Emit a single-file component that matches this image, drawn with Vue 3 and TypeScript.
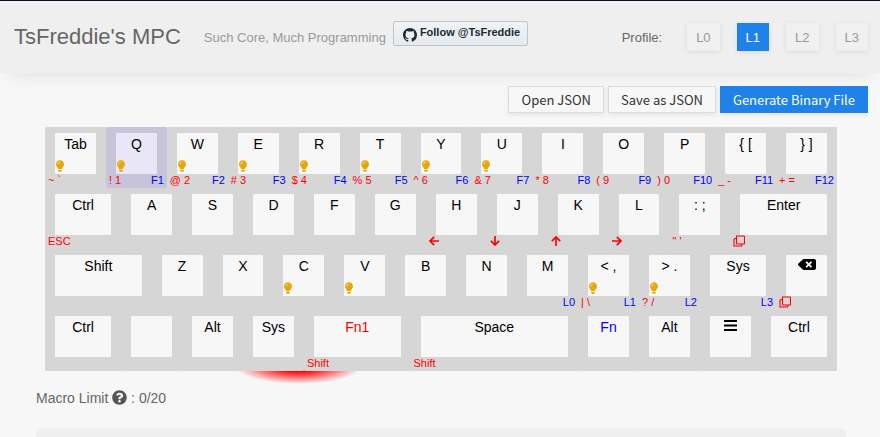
<script setup lang="ts">
import { ref } from 'vue'

type Icon = 'left' | 'down' | 'up' | 'right' | 'copy'

interface Key {
  label: string
  span?: number
  red?: string
  redIcon?: Icon
  blue?: string
  light?: boolean
  tone?: 'red' | 'blue'
  glyph?: 'backspace' | 'menu'
}

// Key widths are counted in quarter units: 4 is a regular key, 52 a full row.
const keys: Key[] = [
  { label: 'Tab', red: '~ `', light: true },
  { label: 'Q', red: '! 1', blue: 'F1', light: true },
  { label: 'W', red: '@ 2', blue: 'F2', light: true },
  { label: 'E', red: '# 3', blue: 'F3', light: true },
  { label: 'R', red: '$ 4', blue: 'F4', light: true },
  { label: 'T', red: '% 5', blue: 'F5', light: true },
  { label: 'Y', red: '^ 6', blue: 'F6', light: true },
  { label: 'U', red: '& 7', blue: 'F7', light: true },
  { label: 'I', red: '* 8', blue: 'F8' },
  { label: 'O', red: '( 9', blue: 'F9' },
  { label: 'P', red: ') 0', blue: 'F10' },
  { label: '{ [', red: '_ -', blue: 'F11' },
  { label: '} ]', red: '+ =', blue: 'F12' },

  { label: 'Ctrl', span: 5, red: 'ESC' },
  { label: 'A' },
  { label: 'S' },
  { label: 'D' },
  { label: 'F' },
  { label: 'G' },
  { label: 'H', redIcon: 'left' },
  { label: 'J', redIcon: 'down' },
  { label: 'K', redIcon: 'up' },
  { label: 'L', redIcon: 'right' },
  { label: ': ;', red: '" \'' },
  { label: 'Enter', span: 7, redIcon: 'copy' },

  { label: 'Shift', span: 7 },
  { label: 'Z' },
  { label: 'X' },
  { label: 'C', light: true },
  { label: 'V', light: true },
  { label: 'B' },
  { label: 'N' },
  { label: 'M', blue: 'L0' },
  { label: '< ,', red: '| \\', blue: 'L1', light: true },
  { label: '> .', red: '? /', blue: 'L2', light: true },
  { label: 'Sys', span: 5, blue: 'L3' },
  { label: '', glyph: 'backspace', redIcon: 'copy' },

  { label: 'Ctrl', span: 5 },
  { label: '' },
  { label: 'Alt' },
  { label: 'Sys' },
  { label: 'Fn1', span: 7, red: 'Shift', tone: 'red' },
  { label: 'Space', span: 11, red: 'Shift' },
  { label: 'Fn', tone: 'blue' },
  { label: 'Alt' },
  { label: '', glyph: 'menu' },
  { label: 'Ctrl', span: 5 },
]

const arrowTurn: Record<string, string> = { left: 'turn-0', up: 'turn-1', right: 'turn-2', down: 'turn-3' }

const profiles = ['L0', 'L1', 'L2', 'L3']
const profile = ref('L1')
const selected = ref(1)
const macros = ref(0)
</script>

<template>
  <header class="top">
    <h1>TsFreddie's MPC</h1>
    <span class="tagline">Such Core, Much Programming</span>
    <a class="follow" href="#">
      <svg viewBox="0 0 16 16" width="14" height="14" aria-hidden="true">
        <path d="M8 0C3.58 0 0 3.58 0 8c0 3.54 2.29 6.53 5.47 7.59.4.07.55-.17.55-.38 0-.19-.01-.82-.01-1.49-2.01.37-2.53-.49-2.69-.94-.09-.23-.48-.94-.82-1.13-.28-.15-.68-.52-.01-.53.63-.01 1.08.58 1.23.82.72 1.21 1.87.87 2.33.66.07-.52.28-.87.51-1.07-1.78-.2-3.64-.89-3.64-3.95 0-.87.31-1.59.82-2.15-.08-.2-.36-1.02.08-2.12 0 0 .67-.21 2.2.82.64-.18 1.32-.27 2-.27s1.36.09 2 .27c1.53-1.04 2.2-.82 2.2-.82.44 1.1.16 1.92.08 2.12.51.56.82 1.27.82 2.15 0 3.07-1.87 3.75-3.65 3.95.29.25.54.73.54 1.48 0 1.07-.01 1.93-.01 2.2 0 .21.15.46.55.38A8.01 8.01 0 0 0 16 8c0-4.42-3.58-8-8-8z" />
      </svg>
      <span>Follow @TsFreddie</span>
    </a>
    <nav class="profiles">
      <span class="caption">Profile:</span>
      <button
        v-for="p in profiles"
        :key="p"
        type="button"
        :class="{ active: p === profile }"
        @click="profile = p"
      >{{ p }}</button>
    </nav>
  </header>

  <main>
    <div class="actions">
      <button type="button">Open JSON</button>
      <button type="button">Save as JSON</button>
      <button type="button" class="primary">Generate Binary File</button>
    </div>

    <section class="board">
      <div class="glow"></div>
      <button
        v-for="(k, i) in keys"
        :key="i"
        type="button"
        class="key"
        :class="['w' + (k.span ?? 4), { selected: i === selected }]"
        @click="selected = i"
      >
        <span class="cap" :class="k.tone">
          <svg v-if="k.glyph === 'backspace'" class="glyph" viewBox="0 0 640 512" width="18" height="15">
            <path d="M576 64H205.3A64 64 0 0 0 160 82.700L9.400 233.400c-12.500 12.500-12.500 32.800 0 45.300L160 429.300A64 64 0 0 0 205.300 448H576c35.300 0 64-28.700 64-64V128c0-35.300-28.700-64-64-64zm-84.700 254.100c6.200 6.200 6.200 16.400 0 22.600l-22.600 22.600c-6.200 6.200-16.400 6.200-22.600 0L384 301.300l-62.100 62.100c-6.200 6.200-16.400 6.200-22.600 0l-22.600-22.600c-6.200-6.200-6.200-16.400 0-22.600L338.700 256l-62.100-62.100c-6.200-6.200-6.200-16.400 0-22.600l22.600-22.600c6.200-6.200 16.400-6.200 22.600 0l62.100 62.100 62.100-62.100c6.200-6.200 16.400-6.200 22.600 0l22.600 22.600c6.200 6.200 6.200 16.400 0 22.600L429.300 256z" />
          </svg>
          <svg v-else-if="k.glyph === 'menu'" class="glyph" viewBox="0 0 13 15" width="13" height="15">
            <path d="M0 2h13v2H0zM0 6.500h13v2H0zM0 11h13v2H0z" />
          </svg>
          <template v-else>{{ k.label }}</template>
          <svg v-if="k.light" class="bulb" viewBox="0 0 352 512" width="8" height="12">
            <path d="M96.100 454.400c0 6.300 1.900 12.500 5.400 17.700l17.100 25.700a32 32 0 0 0 26.600 14.300h61.700a32 32 0 0 0 26.600-14.300l17.100-25.700a32 32 0 0 0 5.400-17.700V416H96zM0 176c0 44.400 16.500 84.900 43.600 115.800 16.500 18.900 42.400 58.200 52.200 91.500V384h160.300v-.8c9.900-33.200 35.700-72.600 52.200-91.500C335.600 260.900 352 220.400 352 176 352 78.600 272.900-.3 175.500 0 73.400.3 0 83 0 176zm176-80c-44.100 0-80 35.900-80 80 0 8.800-7.200 16-16 16s-16-7.200-16-16c0-61.800 50.200-112 112-112 8.800 0 16 7.200 16 16s-7.200 16-16 16z" />
          </svg>
        </span>
        <span class="legend">
          <span class="red">
            <svg v-if="k.redIcon === 'copy'" viewBox="0 0 12 12" width="12" height="12">
              <path d="M3.500 1h7.200q.8 0 .8.800v6.400q0 .8-.8.800H4.300q-.8 0-.8-.8zM3 3.500H2l-1 .800V11h7.500l.8-1.500" fill="none" stroke="currentColor" stroke-width="1.100" />
            </svg>
            <svg v-else-if="k.redIcon" :class="arrowTurn[k.redIcon]" class="arrow" viewBox="0 0 10 10" width="10" height="10">
              <path d="M5.200 .8L1 5l4.200 4.200M1.200 5H10" fill="none" stroke="currentColor" stroke-width="1.700" />
            </svg>
            <template v-else>{{ k.red }}</template>
          </span>
          <span class="blue">{{ k.blue }}</span>
        </span>
      </button>
    </section>

    <p class="limit">
      Macro Limit
      <svg viewBox="0 0 512 512" width="15" height="15" aria-hidden="true">
        <path d="M504 256c0 137-111 248-248 248S8 393 8 256C8 119.100 119 8 256 8s248 111.100 248 248zM262.700 90c-54.500 0-89.300 23-116.500 63.800-3.500 5.300-2.400 12.400 2.700 16.300l34.700 26.300c5.200 3.900 12.600 3 16.700-2.100 17.900-22.700 30.100-35.800 57.300-35.800 20.400 0 45.700 13.100 45.700 33 0 15-12.400 22.700-32.500 34C247.100 238.500 216 254.900 216 296v4c0 6.600 5.400 12 12 12h56c6.600 0 12-5.400 12-12v-1.300c0-28.500 83.200-29.600 83.200-106.700 0-58-60.200-102-116.500-102zM256 338c-25.400 0-46 20.600-46 46s20.600 46 46 46 46-20.600 46-46-20.600-46-46-46z" />
      </svg>
      : {{ macros }}/20
    </p>

    <section class="panel"></section>
  </main>
</template>

<style>
body {
  background: #f7f7f7;
  overflow: hidden;
}
</style>

<style scoped>
.top,
main {
  font-family: "Liberation Sans", Arial, sans-serif;
  color: #666;
}

.top {
  display: flex;
  align-items: center;
  box-sizing: border-box;
  height: 73px;
  padding: 0 12px 0 14px;
  background: linear-gradient(#f4eef4, #efefef 6px);
  border-top: 1px solid #0e0b20;
  box-shadow: 0 10px 16px -8px rgba(0, 0, 0, 0.09);
}

h1 {
  margin: 0 23px 0 0;
  font-size: 22px;
  font-weight: 400;
}

.tagline {
  margin-right: 7px;
  font-size: 13px;
  color: #999;
}

.follow {
  display: flex;
  gap: 3px;
  box-sizing: border-box;
  height: 25px;
  margin-bottom: 7px;
  padding: 0 7px 0 9px;
  border: 1px solid #c0c4c8;
  border-radius: 2px;
  background: linear-gradient(#f0f3f6, #e4eaef);
  color: #24292e;
  font-size: 11px;
  font-weight: 700;
  line-height: 21px;
  text-decoration: none;
}

.follow svg {
  margin-top: 6px;
  fill: #24292e;
}

.profiles {
  display: flex;
  align-items: center;
  gap: 17px;
  margin-left: auto;
  font-size: 13px;
}

.caption {
  margin-right: 8px;
}

.profiles button {
  height: 28px;
  padding: 0 9px;
  border: 0;
  background: #f0f0f0;
  box-shadow: 0 1px 5px rgba(0, 0, 0, 0.09);
  color: #999;
  font: inherit;
}

.profiles button.active {
  background: #1e82e8;
  color: #fff;
}

.actions {
  display: flex;
  justify-content: flex-end;
  gap: 4px;
  padding: 13px 12px 14px;
}

.actions button {
  height: 27px;
  padding: 0 12px;
  border: 1px solid #dcdcdc;
  background: #f7f7f7;
  box-shadow: 0 2px 5px rgba(0, 0, 0, 0.08);
  color: #333;
  font: 13px "Noto Sans CJK SC", "Open Sans", sans-serif;
  line-height: 25px;
}

.actions button.primary {
  border-color: #1e82e8;
  background: #1e82e8;
  color: #fff;
}

.board {
  position: relative;
  z-index: 0;
  display: grid;
  grid-template-columns: repeat(52, minmax(0, 1fr));
  grid-template-rows: repeat(4, 1fr);
  aspect-ratio: 13 / 4;
  margin: 0 43px 0 45px;
}

.glow {
  position: absolute;
  z-index: -1;
  left: 24%;
  bottom: -13px;
  width: 16%;
  height: 36px;
  background: radial-gradient(closest-side, #f00 30%, rgba(255, 0, 0, 0));
}

.key {
  display: flex;
  flex-direction: column;
  min-width: 0;
  padding: 6px 0 0;
  border: 0;
  border-radius: 1px;
  background: #d6d6d6;
  color: #000;
  font: inherit;
}

.w4 { grid-column: span 4; }
.w5 { grid-column: span 5; }
.w7 { grid-column: span 7; }
.w11 { grid-column: span 11; }

.cap {
  position: relative;
  height: 41px;
  margin: 0 10px;
  background: #f7f7f7;
  font-size: 14px;
  line-height: 22px;
  text-align: center;
}

.key.selected {
  background: #c6c4d8;
}

.selected .cap {
  background: #e8e6f7;
}

.glyph {
  display: block;
  margin: 2px auto 0;
}

.bulb {
  position: absolute;
  left: 1px;
  bottom: 2px;
  fill: #e8a800;
}

.legend {
  display: flex;
  justify-content: space-between;
  padding: 0 3px;
  font-size: 11px;
  line-height: 13px;
}

.legend svg {
  display: block;
}

.legend .arrow {
  margin-top: 1px;
}

.turn-1 { transform: rotate(90deg); }
.turn-2 { transform: rotate(180deg); }
.turn-3 { transform: rotate(270deg); }

.red {
  color: #f00;
}

.blue {
  color: #00f;
}

.limit {
  margin: 0 36px;
  padding: 18px 0 21px;
  font-size: 14px;
  line-height: 18px;
}

.limit svg {
  vertical-align: -2px;
  fill: #555;
}

.panel {
  height: 60px;
  margin: 0 34px 0 36px;
  border-radius: 6px;
  background: #efefef;
}
</style>
